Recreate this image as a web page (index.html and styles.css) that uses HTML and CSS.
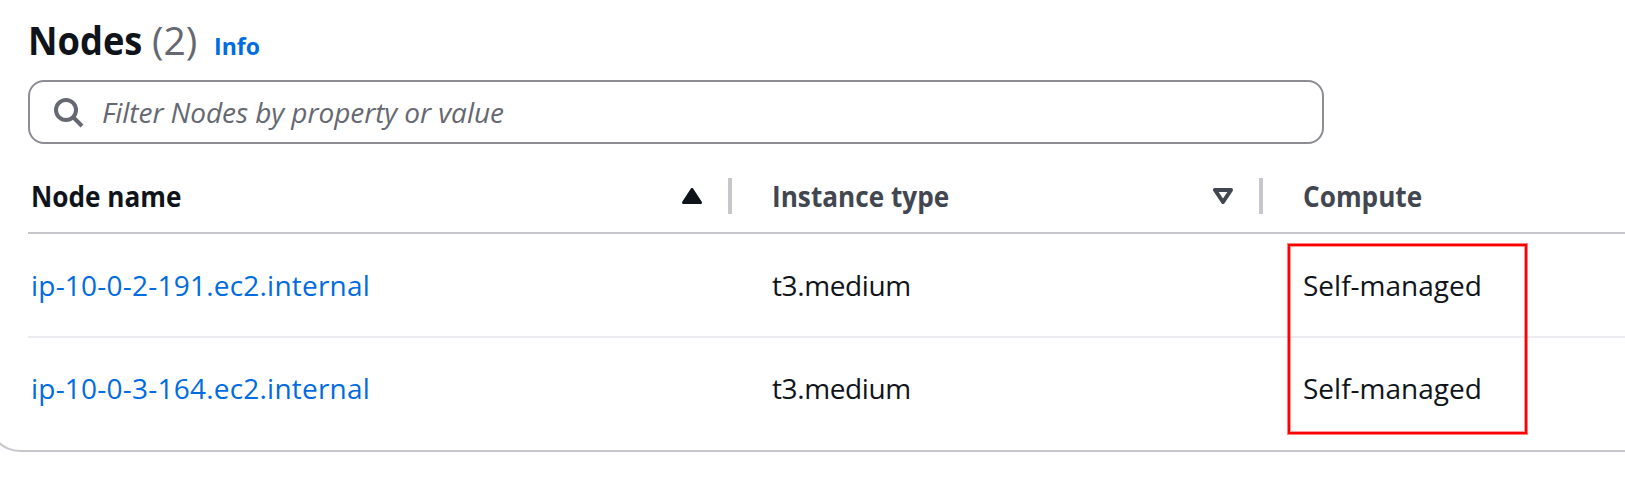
FILE: index.html
```html
<!DOCTYPE html>
<html lang="en">
<head>
<meta charset="utf-8">
<title>Nodes</title>
<link rel="stylesheet" href="styles.css">
</head>
<body>
<section class="panel">
  <header class="panel-header">
    <h2 class="title">Nodes</h2>
    <span class="count">(2)</span>
    <a class="info">Info</a>
  </header>
  <div class="search">
    <svg class="search-icon" viewBox="0 0 30 30"><circle cx="12" cy="12" r="10" /><path d="M19 19 L28 28" /></svg>
    <span class="placeholder">Filter Nodes by property or value</span>
  </div>
  <div class="table">
    <div class="row head">
      <div class="cell sorted"><span class="label">Node name</span>
        <svg class="sort" viewBox="0 0 20 16"><path class="solid" d="M10 1.5 L18.5 14.5 H1.5 Z" /></svg></div>
      <div class="cell"><span class="label">Instance type</span>
        <svg class="sort" viewBox="0 0 20 16"><path class="hollow" d="M2 2 H18 L10 14 Z" /></svg></div>
      <div class="cell"><span class="label">Compute</span></div>
    </div>
    <div class="row">
      <div class="cell"><a class="link">ip-10-0-2-191.ec2.internal</a></div>
      <div class="cell"><span class="type">t3.medium</span></div>
      <div class="cell"><span class="compute">Self-managed</span></div>
    </div>
    <div class="row last">
      <div class="cell"><a class="link">ip-10-0-3-164.ec2.internal</a></div>
      <div class="cell"><span class="type">t3.medium</span></div>
      <div class="cell"><span class="compute">Self-managed</span></div>
    </div>
    <div class="highlight"></div>
  </div>
</section>
</body>
</html>
```
FILE: styles.css
```css
* { box-sizing: border-box; }
body {
  margin: 0;
  height: 480px;
  overflow: hidden;
  background: #fff;
  color: #0f141a;
  font-family: "Open Sans", "Noto Sans", sans-serif;
  font-size: 28px;
  line-height: 40px;
}
.panel {
  width: 1680px;
  height: 452px;
  margin-left: -12px;
  padding: 16px 0 0 38px;
  border-bottom: 2px solid #c6c6cd;
  border-left: 2px solid #c6c6cd;
  border-radius: 0 0 0 32px;
}
.panel-header {
  display: flex;
  align-items: baseline;
  height: 64px;
  line-height: 48px;
}
.title, .info, .label { transform-origin: left; }
.title { margin: 0 -9px 0 0; font-size: 39px; font-weight: 700; transform: scaleX(0.93); }
.count { margin-left: 10px; font-size: 39px; color: #656871; }
.info { margin-left: 17px; font-size: 24px; font-weight: 700; color: #006ce0; transform: scaleX(0.96); }
.search {
  display: flex;
  align-items: center;
  width: 1296px;
  height: 64px;
  padding-left: 24px;
  border: 2px solid #8c8c94;
  border-radius: 16px;
}
.search-icon { width: 30px; height: 30px; margin-top: 1px; fill: none; stroke: #656871; stroke-width: 4; }
.placeholder { margin-left: 18px; font-style: italic; letter-spacing: -0.06px; color: #656871; }
.table { position: relative; margin-top: 18px; }
.row {
  display: grid;
  grid-template-columns: 704px 531px 1fr;
  height: 104px;
  border-bottom: 2px solid #ebebf0;
}
.cell { display: flex; align-items: center; padding-left: 3px; }
.cell + .cell { padding-left: 40px; }
.head { height: 72px; padding-bottom: 2px; border-color: #c6c6cd; font-weight: 700; color: #424650; }
.label { transform: scaleX(0.935); }
.head .cell:not(:last-child) {
  height: 36px;
  align-self: center;
  justify-content: space-between;
  padding-right: 26px;
  border-right: 4px solid #c6c6cd;
}
.sorted { color: #0f141a; }
.sort { width: 20px; height: 16px; stroke: currentColor; stroke-linejoin: round; }
.solid { fill: currentColor; stroke-width: 3; }
.hollow { fill: none; stroke-width: 4; }
.last { height: 100px; border: 0; }
.link { letter-spacing: 0.22px; color: #006ce0; }
.type { letter-spacing: -0.4px; }
.highlight {
  position: absolute;
  left: 1260px;
  top: 82px;
  width: 239px;
  height: 190px;
  border: 2px solid #f00;
  box-shadow: 0 0 0 1px rgba(255, 0, 0, 0.5), inset 0 0 0 1px rgba(255, 0, 0, 0.4);
}
```
